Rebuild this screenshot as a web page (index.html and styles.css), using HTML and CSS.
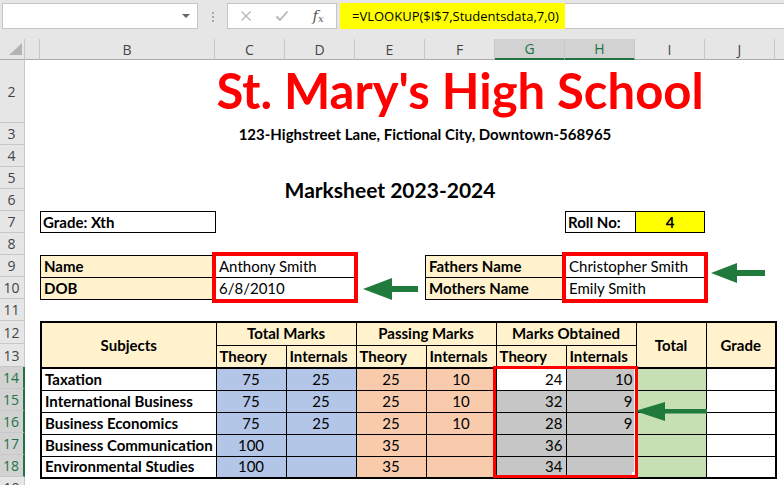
FILE: index.html
```html
<!DOCTYPE html>
<html>
<head>
<meta charset="utf-8">
<title>Marksheet</title>
<link rel="stylesheet" href="styles.css">
</head>
<body>
<div class="fbar">
  <div class="namebox"><span class="dd"></span></div>
  <div class="grip"><i></i><i></i><i></i></div>
  <div class="fxgroup">
    <span class="fxbtn"><svg width="12" height="12" viewBox="0 0 12 12"><path d="M1.5 1.5L10.5 10.5M10.5 1.5L1.5 10.5" stroke="#b5b5b5" stroke-width="1.3" fill="none"/></svg></span>
    <span class="fxbtn"><svg width="14" height="12" viewBox="0 0 14 12"><path d="M1.5 6.5L5 10L12.5 1.5" stroke="#b5b5b5" stroke-width="1.8" fill="none"/></svg></span>
    <span class="fxbtn fx">f<span class="fxx">x</span></span>
  </div>
  <div class="finput"><span class="ftext">=VLOOKUP($I$7,Studentsdata,7,0)</span><span class="frest"></span></div>
</div>

<div class="sheet">
  <div class="ch corner"><svg width="24" height="20" viewBox="0 0 24 20"><polygon points="22,4 22,16 9,16" fill="#b4b4b4"/></svg></div>
  <div class="ch"></div>
  <div class="ch">B</div>
  <div class="ch">C</div>
  <div class="ch">D</div>
  <div class="ch">E</div>
  <div class="ch">F</div>
  <div class="ch sel">G</div>
  <div class="ch sel">H</div>
  <div class="ch">I</div>
  <div class="ch">J</div>
  <div class="ch end"></div>

  <div class="rh">2</div>
  <div class="rh">3</div>
  <div class="rh">4</div>
  <div class="rh">5</div>
  <div class="rh">6</div>
  <div class="rh">7</div>
  <div class="rh">8</div>
  <div class="rh">9</div>
  <div class="rh">10</div>
  <div class="rh">11</div>
  <div class="rh">12</div>
  <div class="rh">13</div>
  <div class="rh sel">14</div>
  <div class="rh sel">15</div>
  <div class="rh sel">16</div>
  <div class="rh sel">17</div>
  <div class="rh sel">18</div>
  <div class="rh">19</div>

  <div class="title">St. Mary's High School</div>
  <div class="addr">123-Highstreet Lane, Fictional City, Downtown-568965</div>
  <div class="msheet">Marksheet 2023-2024</div>

  <div class="grade">Grade: Xth</div>
  <div class="roll-l">Roll No:</div>
  <div class="roll-v">4</div>

  <table class="info info-name">
    <colgroup><col class="w175"><col class="w140"></colgroup>
    <tr><td class="lab">Name</td><td>Anthony Smith</td></tr>
    <tr><td class="lab">DOB</td><td>6/8/2010</td></tr>
  </table>

  <table class="info info-parents">
    <colgroup><col class="w140"><col class="w140"></colgroup>
    <tr><td class="lab">Fathers Name</td><td>Christopher Smith</td></tr>
    <tr><td class="lab">Mothers Name</td><td>Emily Smith</td></tr>
  </table>

  <table class="marks">
    <colgroup><col class="w175"><col span="8" class="w70"></colgroup>
    <tr class="hr1">
      <td rowspan="2" class="hd ctr tb">Subjects</td>
      <td colspan="2" class="hd ctr">Total Marks</td>
      <td colspan="2" class="hd ctr">Passing Marks</td>
      <td colspan="2" class="hd ctr">Marks Obtained</td>
      <td rowspan="2" class="hd ctr tb">Total</td>
      <td rowspan="2" class="hd ctr tb">Grade</td>
    </tr>
    <tr class="hr2">
      <td class="hd tb">Theory</td><td class="hd tb">Internals</td>
      <td class="hd tb">Theory</td><td class="hd tb">Internals</td>
      <td class="hd tb">Theory</td><td class="hd tb">Internals</td>
    </tr>
    <tr>
      <td class="subj">Taxation</td>
      <td class="bl ctr">75</td><td class="bl ctr">25</td>
      <td class="or ctr">25</td><td class="or ctr">10</td>
      <td class="num">24</td><td class="gy num">10</td>
      <td class="gn"></td><td></td>
    </tr>
    <tr>
      <td class="subj">International Business</td>
      <td class="bl ctr">75</td><td class="bl ctr">25</td>
      <td class="or ctr">25</td><td class="or ctr">10</td>
      <td class="gy num">32</td><td class="gy num">9</td>
      <td class="gn"></td><td></td>
    </tr>
    <tr>
      <td class="subj">Business Economics</td>
      <td class="bl ctr">75</td><td class="bl ctr">25</td>
      <td class="or ctr">25</td><td class="or ctr">10</td>
      <td class="gy num">28</td><td class="gy num">9</td>
      <td class="gn"></td><td></td>
    </tr>
    <tr>
      <td class="subj">Business Communication</td>
      <td class="bl ctr">100</td><td class="bl ctr"></td>
      <td class="or ctr">35</td><td class="or ctr"></td>
      <td class="gy num">36</td><td class="gy num"></td>
      <td class="gn"></td><td></td>
    </tr>
    <tr>
      <td class="subj">Environmental Studies</td>
      <td class="bl ctr">100</td><td class="bl ctr"></td>
      <td class="or ctr">35</td><td class="or ctr"></td>
      <td class="gy num">34</td><td class="gy num"></td>
      <td class="gn"></td><td></td>
    </tr>
  </table>

  <div class="redbox red-name"></div>
  <div class="redbox red-parents"></div>
  <div class="selbox"></div>
</div>

<svg class="arrows" width="784" height="485" viewBox="0 0 784 485">
  <polygon points="363,289 392,278 392,286 418,286 418,292 392,292 392,300" fill="#1f7a3c"/>
  <polygon points="711,273 737,263 737,270 765,270 765,276 737,276 737,283" fill="#1f7a3c"/>
  <polygon points="635,411 665,402 665,409 707,409 707,413.5 665,413.5 665,421" fill="#1f7a3c"/>
</svg>
</body>
</html>
```

FILE: styles.css
```css
* { box-sizing: border-box; }
html, body { margin: 0; padding: 0; }
body {
  width: 784px;
  height: 485px;
  overflow: hidden;
  position: relative;
  background: #e6e6e6;
  font-family: Lato, "Liberation Sans", sans-serif;
  color: #000;
}

/* formula bar */
.fbar {
  height: 39px;
  display: flex;
  align-items: flex-start;
  padding-top: 3px;
  background: #e6e6e6;
}
.namebox {
  margin-left: 2px;
  width: 196px;
  height: 26px;
  background: #fff;
  border: 1px solid #c6c6c6;
  display: flex;
  justify-content: flex-end;
  align-items: center;
  padding-right: 7px;
}
.dd {
  width: 0; height: 0;
  border-left: 4px solid transparent;
  border-right: 4px solid transparent;
  border-top: 4px solid #666;
}
.grip {
  width: 29px;
  display: flex;
  flex-direction: column;
  align-items: center;
  gap: 2px;
  padding-top: 9px;
}
.grip i { display: block; width: 2px; height: 2px; background: #a9a9a9; }
.fxgroup {
  width: 110px;
  height: 26px;
  background: #fff;
  border: 1px solid #c6c6c6;
  display: flex;
  align-items: center;
}
.fxbtn {
  width: 36px;
  display: flex;
  justify-content: center;
  align-items: center;
}
.fx {
  font-family: "DejaVu Serif", "Liberation Serif", serif;
  font-style: italic;
  font-size: 15px;
  color: #5a5a5a;
  line-height: 1;
}
.fxx { font-size: 10px; position: relative; top: 3px; }
.finput {
  flex: 1;
  margin-left: 3px;
  height: 26px;
  display: flex;
}
.ftext {
  width: 225px;
  height: 26px;
  background: #ffff00;
  padding-left: 12px;
  font-family: "Open Sans", "Noto Sans", sans-serif;
  font-size: 13px;
  line-height: 26px;
  white-space: nowrap;
}
.frest {
  flex: 1;
  background: #fff;
  border-top: 1px solid #c6c6c6;
  border-bottom: 1px solid #c6c6c6;
}

/* sheet grid */
.sheet {
  display: grid;
  grid-template-columns: 25px 15px 175px repeat(8, 70px) 1fr;
  grid-template-rows: 21px 63px repeat(9, 22px) 23px 23px repeat(6, 22px);
  height: 446px;
  overflow: hidden;
  background: #fff;
  font-size: 15px;
}
.ch {
  grid-row: 1;
  background: #e6e6e6;
  border-right: 1px solid #c8c8c8;
  border-bottom: 1px solid #ababab;
  font-family: "Open Sans", "Noto Sans", sans-serif;
  font-size: 14px;
  color: #444;
  display: flex;
  align-items: center;
  justify-content: center;
}
.ch.corner { border-right: 1px solid #c8c8c8; align-items: flex-start; justify-content: flex-start; }
.ch.end { border-right: 0; }
.ch.sel {
  background: #d2d2d2;
  color: #217346;
  border-bottom: 2px solid #217346;
}
.rh {
  grid-column: 1;
  background: #e6e6e6;
  border-right: 1px solid #c8c8c8;
  border-bottom: 1px solid #c8c8c8;
  font-family: "Open Sans", "Noto Sans", sans-serif;
  font-size: 14px;
  color: #444;
  display: flex;
  align-items: center;
  justify-content: center;
  padding-right: 1px;
}
.rh.sel {
  background: #d2d2d2;
  color: #217346;
  border-right: 2px solid #217346;
}

.title {
  grid-column: 4 / 11;
  grid-row: 2;
  align-self: start;
  margin-top: 6px;
  text-align: center;
  color: #ff0000;
  font-weight: 700;
  font-size: 49px;
  line-height: 49px;
  white-space: nowrap;
}
.addr {
  grid-column: 4 / 10;
  grid-row: 3;
  align-self: center;
  text-align: center;
  font-weight: 700;
  font-size: 15px;
  white-space: nowrap;
}
.msheet {
  grid-column: 4 / 9;
  grid-row: 5 / 7;
  align-self: center;
  text-align: center;
  font-weight: 700;
  font-size: 21px;
  white-space: nowrap;
}

.grade, .roll-l, .roll-v {
  grid-row: 7;
  border: 1px solid #000;
  font-weight: 700;
  display: flex;
  align-items: center;
  padding-left: 2px;
}
.grade { grid-column: 3; margin-right: -1px; }
.roll-l { grid-column: 9; margin-right: -1px; }
.roll-v { grid-column: 10; background: #ffff00; justify-content: center; padding-left: 0; }

table { border-collapse: collapse; table-layout: fixed; }
td {
  border: 1px solid #000;
  padding: 0 3px;
  font-size: 15px;
  line-height: 1;
  white-space: nowrap;
  overflow: hidden;
  vertical-align: middle;
}
.w175 { width: 175px; }
.w140 { width: 140px; }
.w70 { width: 70px; }

.info { grid-row: 9 / 11; align-self: start; }
.info tr { height: 22px; }
.info-name { grid-column: 3 / 6; width: 315px; }
.info-parents { grid-column: 7 / 11; width: 280px; }
.lab { background: #fff2cc; font-weight: 700; }

.marks {
  grid-column: 3 / 12;
  grid-row: 12 / 19;
  width: 735px;
  align-self: start;
  border: 2px solid #000;
}
.marks tr { height: 22px; }
.marks tr.hr1, .marks tr.hr2 { height: 23px; }
.hd { background: #fff2cc; font-weight: 700; }
.ctr { text-align: center; }
.tb { border-bottom: 2px solid #000; }
.subj { font-weight: 700; }
.num { text-align: right; padding-right: 3px; }
.bl { background: #b4c6e7; }
.or { background: #f8cbad; }
.gy { background: #c6c6c6; }
.gn { background: #c6e0b4; }

.redbox {
  grid-row: 9 / 11;
  border: 4px solid #ff0000;
  margin: -3px -3px -4px -3px;
  z-index: 2;
}
.red-name { grid-column: 4 / 6; }
.red-parents { grid-column: 9 / 11; }
.selbox {
  grid-column: 8 / 10;
  grid-row: 14 / 19;
  border: 3px solid #ff0000;
  margin: -1px -3px -1px -2px;
  box-shadow: inset -1px 0 0 #fff;
  z-index: 2;
  position: relative;
}
.selbox::after {
  content: "";
  position: absolute;
  right: 0;
  bottom: 0;
  width: 3px;
  height: 3px;
  background: #fff;
}

.arrows {
  position: absolute;
  left: 0;
  top: 0;
  pointer-events: none;
  z-index: 5;
}
```
